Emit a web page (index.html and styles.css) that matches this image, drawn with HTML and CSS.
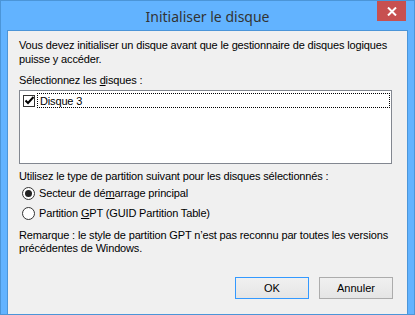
FILE: index.html
```html
<!DOCTYPE html>
<html lang="fr">

<head>
  <meta charset="UTF-8">
  <title>Initialiser le disque</title>
  <link rel="stylesheet" href="styles.css">
</head>

<body>
  <div class="window">
    <div class="titlebar">
      <span class="title">Initialiser le disque</span>
      <button class="close" type="button" aria-label="Fermer">
        <svg width="10" height="9" viewBox="0 0 10 9">
          <path d="M1 0.5 L9 8.5 M9 0.5 L1 8.5" stroke="#fff" stroke-width="2" fill="none" />
        </svg>
      </button>
    </div>

    <div class="client">
      <p class="text">Vous devez initialiser un disque avant que le gestionnaire de disques logiques puisse y accéder.</p>

      <p class="label">Sélectionnez les <u>d</u>isques :</p>
      <div class="listbox">
        <div class="item">
          <span class="check">
            <svg width="9" height="9" viewBox="0 0 9 9">
              <path d="M0.5 4.5 L3 7 L8.5 1" stroke="#000" stroke-width="2" fill="none" />
            </svg>
          </span>
          <span class="item-text">Disque 3</span>
        </div>
      </div>

      <p class="label second">Utilisez le type de partition suivant pour les disques sélectionnés :</p>
      <div class="radios">
        <label class="radio"><span class="dot checked"></span><span>Secteur de dé<u>m</u>arrage principal</span></label>
        <label class="radio"><span class="dot"></span><span>Partition <u>G</u>PT (GUID Partition Table)</span></label>
      </div>

      <p class="text note">Remarque : le style de partition GPT n’est pas reconnu par toutes les versions précédentes de Windows.</p>

      <div class="buttons">
        <button type="button" class="btn default">OK</button>
        <button type="button" class="btn">Annuler</button>
      </div>
    </div>
  </div>
</body>

</html>
```

FILE: styles.css
```css
html,
body {
  margin: 0;
  padding: 0;
}

body {
  width: 415px;
  height: 315px;
  font-family: "Liberation Sans", Arial, sans-serif;
  font-size: 11px;
  color: #000;
}

.window {
  position: relative;
  box-sizing: border-box;
  width: 415px;
  height: 315px;
  padding: 0 6px 6px 6px;
  background: #62b3ff;
  border: 1px solid #4b95d8;
}

.titlebar {
  height: 29px;
  display: flex;
  justify-content: center;
  align-items: center;
}

.title {
  font-family: "Noto Sans", "Open Sans", sans-serif;
  font-size: 14px;
  color: #333;
  padding-top: 1px;
}

.close {
  position: absolute;
  top: 0;
  right: 8px;
  width: 29px;
  height: 20px;
  padding: 0;
  border: none;
  background: #c75050;
  display: flex;
  justify-content: center;
  align-items: center;
}

.client {
  height: 276px;
  background: #f0f0f0;
  border: 1px solid #4b95d8;
  padding: 7px 11px 0 11px;
  letter-spacing: -0.15px;
}

.client p {
  margin: 0;
}

.text {
  line-height: 14px;
  width: 378px;
}

.label {
  margin-top: 7px !important;
  line-height: 14px;
}

.listbox {
  margin-top: 3px;
  width: 371px;
  height: 70px;
  background: #fff;
  border: 1px solid #828790;
  padding-top: 2px;
  box-sizing: content-box;
}

.item {
  display: flex;
  align-items: center;
  height: 15px;
  padding-left: 3px;
}

.check {
  box-sizing: border-box;
  width: 12px;
  height: 12px;
  border: 1px solid #333;
  background: #fff;
  display: flex;
  justify-content: center;
  align-items: center;
}

.item-text {
  flex: 1;
  margin-left: 2px;
  margin-right: 1px;
  height: 15px;
  line-height: 14px;
  padding-left: 2px;
  box-sizing: border-box;
  border: 1px dotted #000;
}

.second {
  margin-top: 5px !important;
}

.radios {
  display: flex;
  flex-direction: column;
}

.radio {
  display: flex;
  align-items: center;
  height: 20px;
  padding-left: 3px;
}

.dot {
  box-sizing: border-box;
  width: 13px;
  height: 13px;
  border: 1px solid #333;
  border-radius: 50%;
  background: #fff;
  margin-right: 4px;
  display: flex;
  justify-content: center;
  align-items: center;
}

.dot.checked::after {
  content: "";
  width: 7px;
  height: 7px;
  border-radius: 50%;
  background: #222;
}

.note {
  margin-top: 6px !important;
  line-height: 13px;
}

.buttons {
  display: flex;
  justify-content: flex-end;
  gap: 10px;
  margin-top: 22px;
  padding-right: 3px;
}

.btn {
  box-sizing: border-box;
  width: 74px;
  height: 22px;
  font-family: "Liberation Sans", Arial, sans-serif;
  font-size: 11px;
  color: #000;
  background: linear-gradient(#f0f0f0, #e5e5e5);
  border: 1px solid #acacac;
  padding: 0;
}

.btn.default {
  border-color: #3399ff;
}
```
